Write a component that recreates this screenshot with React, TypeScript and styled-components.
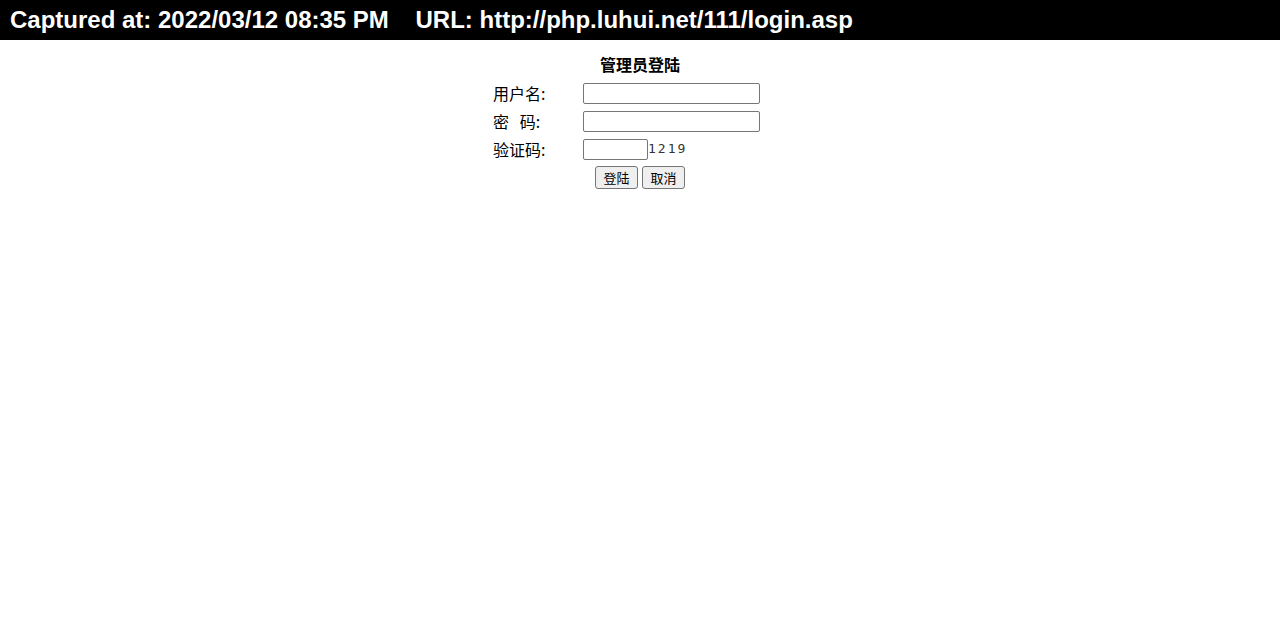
import React from "react";
import styled, { createGlobalStyle } from "styled-components";

const Global = createGlobalStyle`
  html, body { margin: 0; padding: 0; background: #fff; }
  body { font-family: "Liberation Sans", Arial, "Noto Sans CJK SC", sans-serif; }
`;

const Header = styled.div`
  height: 40px;
  background: #000;
  color: #fff;
  font-family: "Liberation Sans", Arial, sans-serif;
  font-weight: bold;
  font-size: 24px;
  line-height: 40px;
  padding-left: 10px;
  white-space: pre;
`;

const Form = styled.div`
  width: 300px;
  margin: 0 auto;
  padding-top: 15px;
  font-family: "Noto Sans CJK SC", "Liberation Sans", sans-serif;
  font-size: 16px;
  color: #000;
`;

const Title = styled.div`
  text-align: center;
  font-weight: bold;
  font-size: 16px;
  line-height: 18px;
  height: 18px;
  margin-bottom: 6px;
`;

const Row = styled.div`
  display: grid;
  grid-template-columns: 90px 1fr;
  height: 28px;
  align-items: center;
`;

const Label = styled.div`
  padding-left: 3px;
  white-space: pre;
  line-height: 18px;
`;

const Field = styled.div`
  padding-left: 3px;
  display: flex;
  align-items: center;
`;

const Input = styled.input<{ $w: number }>`
  box-sizing: border-box;
  width: ${(p) => p.$w}px;
  height: 21px;
  border: 1px solid #767676;
  border-radius: 2px;
  padding: 1px 2px;
  margin: 0;
  background: #fff;
`;

const Captcha = styled.span`
  font-family: "DejaVu Sans Mono", monospace;
  font-size: 13px;
  letter-spacing: 2px;
  color: #333;
  line-height: 14px;
`;

const ButtonRow = styled.div`
  display: flex;
  justify-content: center;
  gap: 4px;
  margin-top: 3px;
`;

const Button = styled.button`
  box-sizing: border-box;
  height: 23px;
  padding: 0 7.5px;
  font-family: "Noto Sans CJK SC", sans-serif;
  font-size: 13px;
  line-height: 19px;
  background: #efefef;
  border: 1px solid #767676;
  border-radius: 3px;
  color: #000;
`;

export default function App() {
  return (
    <>
      <Global />
      <Header>{"Captured at: 2022/03/12 08:35 PM    URL: http://php.luhui.net/111/login.asp"}</Header>
      <Form>
        <Title>管理员登陆</Title>
        <Row>
          <Label>用户名:</Label>
          <Field>
            <Input $w={177} type="text" />
          </Field>
        </Row>
        <Row>
          <Label>{"密   码:"}</Label>
          <Field>
            <Input $w={177} type="password" />
          </Field>
        </Row>
        <Row>
          <Label>验证码:</Label>
          <Field>
            <Input $w={65} type="text" />
            <Captcha>1219</Captcha>
          </Field>
        </Row>
        <ButtonRow>
          <Button>登陆</Button>
          <Button>取消</Button>
        </ButtonRow>
      </Form>
    </>
  );
}
